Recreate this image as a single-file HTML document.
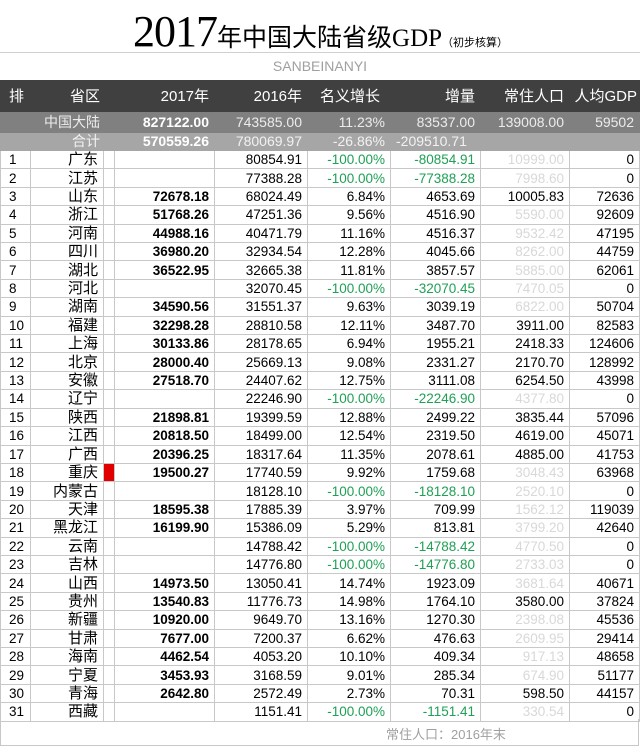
<!DOCTYPE html>
<html><head><meta charset="utf-8"><style>
*{margin:0;padding:0;box-sizing:border-box}
body{width:640px;height:748px;background:#fff;font-family:"Liberation Sans","Noto Sans CJK SC",sans-serif;position:relative;overflow:hidden;color:#000}
.title{position:absolute;left:0;top:0;width:640px;height:53px;border-bottom:1px solid #d0d0d0}
.title .t{position:absolute;left:133px;top:6px;white-space:nowrap;font-family:"Liberation Serif","Noto Serif CJK SC",serif}
.big{font-size:44px;letter-spacing:-1px}
.mid{font-size:25px;font-family:"Liberation Sans","Noto Sans CJK SC",sans-serif}
.gdp{font-size:25px;font-family:"Liberation Serif",serif}
.sm{font-size:11px;font-family:"Liberation Sans","Noto Sans CJK SC",sans-serif}
.sub{position:absolute;left:0;top:53px;width:640px;height:27px;text-align:center;line-height:27px;font-size:14px;color:#a0a0a0}
table{position:absolute;left:0;top:80px;border-collapse:collapse;table-layout:fixed;width:639px}
td{font-size:13.5px;white-space:nowrap;overflow:hidden;text-align:right;padding:0 5px 0 0;border:1px solid #c8c8c8;height:18.42px;line-height:17px}
td:first-child{text-align:left;padding-left:8px}
tr.h td{background:#404040;color:#fff;height:31px;font-size:15px;border-color:#404040}
tr.m td{background:#808080;color:#ececec;height:21px;border-color:#808080;font-size:14px}
tr.s td{background:#a6a6a6;color:#f2f2f2;height:17px;border-color:#a6a6a6;font-size:14px}
tr.m td b,tr.s td b{color:#fff}
b{font-weight:bold}
.g{color:#1fa055}
.l{color:#d8d8d8}
.r{background:#e00000}
.p{font-size:15px}
.foot{position:absolute;left:0;top:719px;width:639px;height:27px;border:1px solid #c8c8c8;border-top:none;font-size:13px;color:#a0a0a0}
.foot span{position:absolute;left:385px;top:5px}
</style></head><body>
<div class="title"><div class="t"><span class="big">2017</span><span class="mid">年中国大陆省级</span><span class="gdp">GDP</span><span class="sm">（初步核算）</span></div></div>
<div class="sub">SANBEINANYI</div>
<table>
<colgroup><col style="width:30px"><col style="width:73px"><col style="width:11px"><col style="width:100px"><col style="width:93px"><col style="width:83px"><col style="width:90px"><col style="width:89px"><col style="width:70px"></colgroup>
<tr class="h"><td>排</td><td colspan="2" style="padding-right:14px">省区</td><td>2017年</td><td>2016年</td><td style="padding-right:10px">名义增长</td><td>增量</td><td>常住人口</td><td style="padding-right:2px">人均GDP</td></tr>
<tr class="m"><td></td><td colspan="2" style="padding-right:14px">中国大陆</td><td><b>827122.00</b></td><td>743585.00</td><td>11.23%</td><td>83537.00</td><td>139008.00</td><td>59502</td></tr>
<tr class="s"><td></td><td colspan="2" style="padding-right:14px">合计</td><td><b>570559.26</b></td><td>780069.97</td><td>-26.86%</td><td style="text-align:left;padding-left:5px">-209510.71</td><td></td><td></td></tr>
<tr><td>1</td><td class="p">广东</td><td></td><td></td><td>80854.91</td><td class="g">-100.00%</td><td class="g">-80854.91</td><td class="l">10999.00</td><td>0</td></tr>
<tr><td>2</td><td class="p">江苏</td><td></td><td></td><td>77388.28</td><td class="g">-100.00%</td><td class="g">-77388.28</td><td class="l">7998.60</td><td>0</td></tr>
<tr><td>3</td><td class="p">山东</td><td></td><td><b>72678.18</b></td><td>68024.49</td><td>6.84%</td><td>4653.69</td><td>10005.83</td><td>72636</td></tr>
<tr><td>4</td><td class="p">浙江</td><td></td><td><b>51768.26</b></td><td>47251.36</td><td>9.56%</td><td>4516.90</td><td class="l">5590.00</td><td>92609</td></tr>
<tr><td>5</td><td class="p">河南</td><td></td><td><b>44988.16</b></td><td>40471.79</td><td>11.16%</td><td>4516.37</td><td class="l">9532.42</td><td>47195</td></tr>
<tr><td>6</td><td class="p">四川</td><td></td><td><b>36980.20</b></td><td>32934.54</td><td>12.28%</td><td>4045.66</td><td class="l">8262.00</td><td>44759</td></tr>
<tr><td>7</td><td class="p">湖北</td><td></td><td><b>36522.95</b></td><td>32665.38</td><td>11.81%</td><td>3857.57</td><td class="l">5885.00</td><td>62061</td></tr>
<tr><td>8</td><td class="p">河北</td><td></td><td></td><td>32070.45</td><td class="g">-100.00%</td><td class="g">-32070.45</td><td class="l">7470.05</td><td>0</td></tr>
<tr><td>9</td><td class="p">湖南</td><td></td><td><b>34590.56</b></td><td>31551.37</td><td>9.63%</td><td>3039.19</td><td class="l">6822.00</td><td>50704</td></tr>
<tr><td>10</td><td class="p">福建</td><td></td><td><b>32298.28</b></td><td>28810.58</td><td>12.11%</td><td>3487.70</td><td>3911.00</td><td>82583</td></tr>
<tr><td>11</td><td class="p">上海</td><td></td><td><b>30133.86</b></td><td>28178.65</td><td>6.94%</td><td>1955.21</td><td>2418.33</td><td>124606</td></tr>
<tr><td>12</td><td class="p">北京</td><td></td><td><b>28000.40</b></td><td>25669.13</td><td>9.08%</td><td>2331.27</td><td>2170.70</td><td>128992</td></tr>
<tr><td>13</td><td class="p">安徽</td><td></td><td><b>27518.70</b></td><td>24407.62</td><td>12.75%</td><td>3111.08</td><td>6254.50</td><td>43998</td></tr>
<tr><td>14</td><td class="p">辽宁</td><td></td><td></td><td>22246.90</td><td class="g">-100.00%</td><td class="g">-22246.90</td><td class="l">4377.80</td><td>0</td></tr>
<tr><td>15</td><td class="p">陕西</td><td></td><td><b>21898.81</b></td><td>19399.59</td><td>12.88%</td><td>2499.22</td><td>3835.44</td><td>57096</td></tr>
<tr><td>16</td><td class="p">江西</td><td></td><td><b>20818.50</b></td><td>18499.00</td><td>12.54%</td><td>2319.50</td><td>4619.00</td><td>45071</td></tr>
<tr><td>17</td><td class="p">广西</td><td></td><td><b>20396.25</b></td><td>18317.64</td><td>11.35%</td><td>2078.61</td><td>4885.00</td><td>41753</td></tr>
<tr><td>18</td><td class="p">重庆</td><td class="r"></td><td><b>19500.27</b></td><td>17740.59</td><td>9.92%</td><td>1759.68</td><td class="l">3048.43</td><td>63968</td></tr>
<tr><td>19</td><td class="p">内蒙古</td><td></td><td></td><td>18128.10</td><td class="g">-100.00%</td><td class="g">-18128.10</td><td class="l">2520.10</td><td>0</td></tr>
<tr><td>20</td><td class="p">天津</td><td></td><td><b>18595.38</b></td><td>17885.39</td><td>3.97%</td><td>709.99</td><td class="l">1562.12</td><td>119039</td></tr>
<tr><td>21</td><td class="p">黑龙江</td><td></td><td><b>16199.90</b></td><td>15386.09</td><td>5.29%</td><td>813.81</td><td class="l">3799.20</td><td>42640</td></tr>
<tr><td>22</td><td class="p">云南</td><td></td><td></td><td>14788.42</td><td class="g">-100.00%</td><td class="g">-14788.42</td><td class="l">4770.50</td><td>0</td></tr>
<tr><td>23</td><td class="p">吉林</td><td></td><td></td><td>14776.80</td><td class="g">-100.00%</td><td class="g">-14776.80</td><td class="l">2733.03</td><td>0</td></tr>
<tr><td>24</td><td class="p">山西</td><td></td><td><b>14973.50</b></td><td>13050.41</td><td>14.74%</td><td>1923.09</td><td class="l">3681.64</td><td>40671</td></tr>
<tr><td>25</td><td class="p">贵州</td><td></td><td><b>13540.83</b></td><td>11776.73</td><td>14.98%</td><td>1764.10</td><td>3580.00</td><td>37824</td></tr>
<tr><td>26</td><td class="p">新疆</td><td></td><td><b>10920.00</b></td><td>9649.70</td><td>13.16%</td><td>1270.30</td><td class="l">2398.08</td><td>45536</td></tr>
<tr><td>27</td><td class="p">甘肃</td><td></td><td><b>7677.00</b></td><td>7200.37</td><td>6.62%</td><td>476.63</td><td class="l">2609.95</td><td>29414</td></tr>
<tr><td>28</td><td class="p">海南</td><td></td><td><b>4462.54</b></td><td>4053.20</td><td>10.10%</td><td>409.34</td><td class="l">917.13</td><td>48658</td></tr>
<tr><td>29</td><td class="p">宁夏</td><td></td><td><b>3453.93</b></td><td>3168.59</td><td>9.01%</td><td>285.34</td><td class="l">674.90</td><td>51177</td></tr>
<tr><td>30</td><td class="p">青海</td><td></td><td><b>2642.80</b></td><td>2572.49</td><td>2.73%</td><td>70.31</td><td>598.50</td><td>44157</td></tr>
<tr><td>31</td><td class="p">西藏</td><td></td><td></td><td>1151.41</td><td class="g">-100.00%</td><td class="g">-1151.41</td><td class="l">330.54</td><td>0</td></tr>
</table>
<div class="foot"><span>常住人口：2016年末</span></div>
</body></html>
